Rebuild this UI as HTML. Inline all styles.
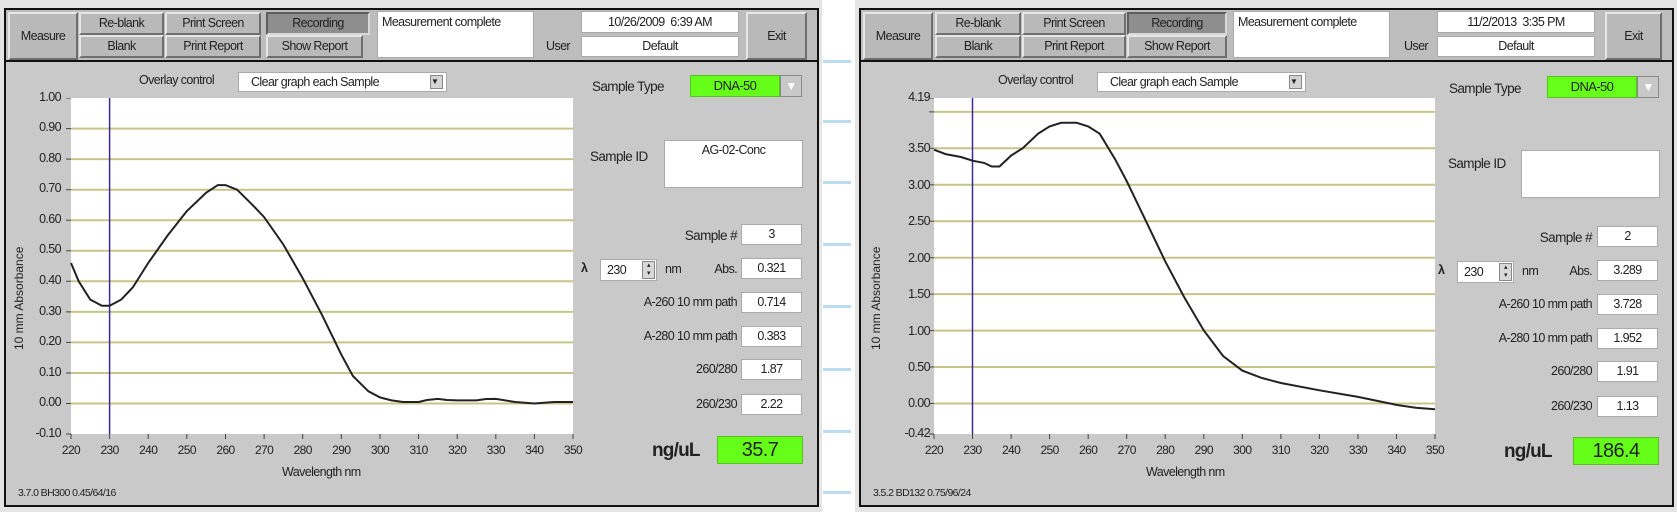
<!DOCTYPE html>
<html><head><meta charset="utf-8"><style>
*{margin:0;padding:0;box-sizing:border-box}
body{width:1677px;height:512px;background:#fff;position:relative;overflow:hidden;font-family:"Liberation Sans",sans-serif;font-size:12.5px;letter-spacing:-0.6px;color:#222}
.pan{position:absolute;top:0;width:822px;height:512px;background:#e4e4e4}
.frame{position:absolute;left:4px;top:8px;width:815px;height:499px;border:2px solid #111;background:#c9c9c9}
.tb{position:absolute;left:0;top:0;width:811px;height:52px;background:#bdbdbd;border-bottom:2px solid #111}
.a{position:absolute;white-space:nowrap}
.btn{position:absolute;background:#b9b9b9;border:2px solid;border-color:#e6e6e6 #6e6e6e #6e6e6e #e6e6e6;text-align:center;font-size:12.5px;color:#222;line-height:19px}
.dk{background:#8e8e8e;border-color:#5e5e5e #d8d8d8 #d8d8d8 #5e5e5e}
.wb{position:absolute;background:#fff;border:1px solid #aaa;text-align:center;font-size:12.5px}
.g{background:#66ff1a;border:1px solid #58c020;text-align:center;font-size:13px}
.lbl{position:absolute;text-align:right;white-space:nowrap;font-size:12.5px}
.dash{position:absolute;left:823px;width:28px;height:3px;background:#bcdcf4}
svg text{letter-spacing:-0.6px}
</style></head><body>

<div class="dash" style="top:60px"></div><div class="dash" style="top:120px"></div><div class="dash" style="top:181px"></div><div class="dash" style="top:243px"></div><div class="dash" style="top:305px"></div><div class="dash" style="top:368px"></div><div class="dash" style="top:430px"></div><div class="dash" style="top:491px"></div>

<!-- LEFT PANEL -->
<div class="pan" style="left:0">
<div class="frame">
 <div class="tb">
  <div class="btn" style="left:2px;top:2px;width:70px;height:48px;line-height:44px">Measure</div>
  <div class="btn" style="left:73px;top:2px;width:85px;height:23px">Re-blank</div>
  <div class="btn" style="left:73px;top:25px;width:85px;height:23px">Blank</div>
  <div class="btn" style="left:159px;top:2px;width:96px;height:23px">Print Screen</div>
  <div class="btn" style="left:159px;top:25px;width:96px;height:23px">Print Report</div>
  <div class="btn dk" style="left:260px;top:2px;width:104px;height:23px">Recording</div>
  <div class="btn" style="left:260px;top:25px;width:97px;height:23px">Show Report</div>
  <div class="wb" style="left:371px;top:1px;width:157px;height:47px;text-align:left;padding:2px 4px;line-height:16px">Measurement complete</div>
  <div class="a" style="left:540px;top:29px">User</div>
  <div class="wb" style="left:575px;top:1px;width:158px;height:22px;line-height:20px">10/26/2009&nbsp; 6:39 AM</div>
  <div class="wb" style="left:575px;top:26px;width:158px;height:21px;line-height:19px">Default</div>
  <div class="btn" style="left:740px;top:2px;width:61px;height:48px;line-height:44px">Exit</div>
 </div>
 <div class="a" style="left:133px;top:63px">Overlay control</div>
 <div class="wb" style="left:232px;top:62px;width:209px;height:20px;line-height:18px;text-align:left;padding-left:12px">Clear graph each Sample<span style="position:absolute;right:3px;top:2px;width:13px;height:14px;background:#d4d4d4;border:1px solid #888;font-size:8px;line-height:12px">▼</span></div>
 <div class="lbl" style="right:756px;top:80px">1.00</div>
 <div class="lbl" style="right:756px;top:110px">0.90</div>
 <div class="lbl" style="right:756px;top:141px">0.80</div>
 <div class="lbl" style="right:756px;top:171px">0.70</div>
 <div class="lbl" style="right:756px;top:202px">0.60</div>
 <div class="lbl" style="right:756px;top:232px">0.50</div>
 <div class="lbl" style="right:756px;top:263px">0.40</div>
 <div class="lbl" style="right:756px;top:294px">0.30</div>
 <div class="lbl" style="right:756px;top:324px">0.20</div>
 <div class="lbl" style="right:756px;top:355px">0.10</div>
 <div class="lbl" style="right:756px;top:385px">0.00</div>
 <div class="lbl" style="right:756px;top:416px">-0.10</div>
 <div class="a" style="left:6px;top:340px;transform:rotate(-90deg);transform-origin:0 0;font-size:12px;letter-spacing:0">10 mm Absorbance</div>
 <svg class="a" style="left:52px;top:88px" width="530" height="362" viewBox="-13 0 530 362">
  <rect x="0" y="0" width="502" height="336" fill="#fff"/>
  <g stroke="#c8c488" stroke-width="2">
   <line x1="0" x2="502" y1="30.6" y2="30.6"/><line x1="0" x2="502" y1="61.1" y2="61.1"/><line x1="0" x2="502" y1="91.7" y2="91.7"/><line x1="0" x2="502" y1="122.2" y2="122.2"/><line x1="0" x2="502" y1="152.8" y2="152.8"/><line x1="0" x2="502" y1="183.3" y2="183.3"/><line x1="0" x2="502" y1="213.9" y2="213.9"/><line x1="0" x2="502" y1="244.4" y2="244.4"/><line x1="0" x2="502" y1="275" y2="275"/><line x1="0" x2="502" y1="305.5" y2="305.5"/>
  </g>
  <g stroke="#444" stroke-width="1"><line x1="-5" x2="0" y1="0" y2="0"/><line x1="-5" x2="0" y1="30.6" y2="30.6"/><line x1="-5" x2="0" y1="61.1" y2="61.1"/><line x1="-5" x2="0" y1="91.7" y2="91.7"/><line x1="-5" x2="0" y1="122.2" y2="122.2"/><line x1="-5" x2="0" y1="152.8" y2="152.8"/><line x1="-5" x2="0" y1="183.3" y2="183.3"/><line x1="-5" x2="0" y1="213.9" y2="213.9"/><line x1="-5" x2="0" y1="244.4" y2="244.4"/><line x1="-5" x2="0" y1="275" y2="275"/><line x1="-5" x2="0" y1="305.5" y2="305.5"/><line x1="-5" x2="0" y1="336" y2="336"/></g>
  <line x1="38.6" x2="38.6" y1="0" y2="336" stroke="#3a2a9a" stroke-width="1.5"/>
  <polyline fill="none" stroke="#222" stroke-width="2" points="0,165 7.7,183.3 19.3,201.6 30.9,207.7 38.6,207.7 50.2,201.6 61.8,189.4 77.2,165 96.6,137.5 115.9,113 135.2,94.7 146.8,87.1 154.5,87.1 166.1,91.7 181.5,106.9 193.1,119.1 212.4,146.6 231.7,180.2 251,216.9 270.3,256.6 281.9,278 297.4,293.3 309,299.4 320.5,302.4 332.1,304 347.6,304 356,302 366.9,300.9 376,302 386.2,302.4 405.5,302.4 415,301 424.9,300.9 444.2,304 463.4,305.5 482.8,304 502,304"/>
  <g stroke="#444"><line x1="0" x2="0" y1="336" y2="341"/><line x1="38.6" x2="38.6" y1="336" y2="341"/><line x1="77.2" x2="77.2" y1="336" y2="341"/><line x1="115.8" x2="115.8" y1="336" y2="341"/><line x1="154.5" x2="154.5" y1="336" y2="341"/><line x1="193.1" x2="193.1" y1="336" y2="341"/><line x1="231.7" x2="231.7" y1="336" y2="341"/><line x1="270.3" x2="270.3" y1="336" y2="341"/><line x1="309" x2="309" y1="336" y2="341"/><line x1="347.6" x2="347.6" y1="336" y2="341"/><line x1="386.2" x2="386.2" y1="336" y2="341"/><line x1="424.8" x2="424.8" y1="336" y2="341"/><line x1="463.4" x2="463.4" y1="336" y2="341"/><line x1="502" x2="502" y1="336" y2="341"/></g>
  <g font-family="Liberation Sans, sans-serif" font-size="12" fill="#222" text-anchor="middle"><text x="0" y="356">220</text><text x="38.6" y="356">230</text><text x="77.2" y="356">240</text><text x="115.8" y="356">250</text><text x="154.5" y="356">260</text><text x="193.1" y="356">270</text><text x="231.7" y="356">280</text><text x="270.3" y="356">290</text><text x="309" y="356">300</text><text x="347.6" y="356">310</text><text x="386.2" y="356">320</text><text x="424.8" y="356">330</text><text x="463.4" y="356">340</text><text x="502" y="356">350</text></g>
 </svg>
 <div class="a" style="left:276px;top:455px">Wavelength nm</div>
 <div class="a" style="left:12px;top:477px;font-size:10.5px">3.7.0 BH300 0.45/64/16</div>
 <div class="a" style="left:586px;top:69px;font-size:13.5px">Sample Type</div>
 <div class="a g" style="left:684px;top:65px;width:90px;height:22px;line-height:20px">DNA-50</div>
 <div class="a" style="left:774px;top:65px;width:22px;height:22px;background:#c8c8c8;border:1px solid #888;color:#fff;font-size:12px;text-align:center;line-height:20px">▼</div>
 <div class="a" style="left:584px;top:139px;font-size:13.5px">Sample ID</div>
 <div class="wb" style="left:658px;top:130px;width:139px;height:48px;line-height:18px">AG-02-Conc</div>
 <div class="lbl" style="right:80px;top:218px;font-size:13.5px">Sample #</div>
 <div class="wb" style="left:735px;top:214px;width:61px;height:21px;line-height:19px">3</div>
 <div class="a" style="left:575px;top:251px;font-weight:bold">λ</div>
 <div class="wb" style="left:594px;top:249px;width:57px;height:22px;line-height:20px;text-align:left;padding-left:6px">230<span style="position:absolute;right:1px;top:1px;width:13px;height:18px;background:#d8d8d8;border:1px solid #888;font-size:7px;line-height:8px;text-align:center">▴<br>▾</span></div>
 <div class="a" style="left:659px;top:252px">nm</div>
 <div class="lbl" style="right:80px;top:252px">Abs.</div>
 <div class="wb" style="left:735px;top:248px;width:61px;height:21px;line-height:19px">0.321</div>
 <div class="lbl" style="right:80px;top:285px">A-260 10 mm path</div>
 <div class="wb" style="left:735px;top:282px;width:61px;height:21px;line-height:19px">0.714</div>
 <div class="lbl" style="right:80px;top:319px">A-280 10 mm path</div>
 <div class="wb" style="left:735px;top:316px;width:61px;height:21px;line-height:19px">0.383</div>
 <div class="lbl" style="right:80px;top:352px">260/280</div>
 <div class="wb" style="left:735px;top:349px;width:61px;height:21px;line-height:19px">1.87</div>
 <div class="lbl" style="right:80px;top:387px">260/230</div>
 <div class="wb" style="left:735px;top:384px;width:61px;height:21px;line-height:19px">2.22</div>
 <div class="a" style="left:646px;top:430px;font-size:19px;font-weight:bold;letter-spacing:-0.8px">ng/uL</div>
 <div class="a g" style="left:711px;top:426px;width:86px;height:28px;line-height:26px;font-size:20px">35.7</div>
</div>
</div>

<!-- RIGHT PANEL -->
<div class="pan" style="left:855px">
<div class="frame">
 <div class="tb">
  <div class="btn" style="left:2px;top:2px;width:70px;height:48px;line-height:44px">Measure</div>
  <div class="btn" style="left:74px;top:2px;width:86px;height:23px">Re-blank</div>
  <div class="btn" style="left:74px;top:25px;width:86px;height:23px">Blank</div>
  <div class="btn" style="left:161px;top:2px;width:104px;height:23px">Print Screen</div>
  <div class="btn" style="left:161px;top:25px;width:104px;height:23px">Print Report</div>
  <div class="btn dk" style="left:266px;top:2px;width:100px;height:23px">Recording</div>
  <div class="btn" style="left:266px;top:25px;width:100px;height:23px">Show Report</div>
  <div class="wb" style="left:372px;top:1px;width:157px;height:47px;text-align:left;padding:2px 4px;line-height:16px">Measurement complete</div>
  <div class="a" style="left:543px;top:29px">User</div>
  <div class="wb" style="left:576px;top:1px;width:158px;height:22px;line-height:20px">11/2/2013&nbsp; 3:35 PM</div>
  <div class="wb" style="left:576px;top:26px;width:158px;height:21px;line-height:19px">Default</div>
  <div class="btn" style="left:744px;top:2px;width:57px;height:48px;line-height:44px">Exit</div>
 </div>
 <div class="a" style="left:137px;top:63px">Overlay control</div>
 <div class="wb" style="left:236px;top:62px;width:209px;height:20px;line-height:18px;text-align:left;padding-left:12px">Clear graph each Sample<span style="position:absolute;right:3px;top:2px;width:13px;height:14px;background:#d4d4d4;border:1px solid #888;font-size:8px;line-height:12px">▼</span></div>
 <div class="lbl" style="right:742px;top:80px">4.19</div>
 <div class="lbl" style="right:742px;top:131px">3.50</div>
 <div class="lbl" style="right:742px;top:168px">3.00</div>
 <div class="lbl" style="right:742px;top:204px">2.50</div>
 <div class="lbl" style="right:742px;top:241px">2.00</div>
 <div class="lbl" style="right:742px;top:277px">1.50</div>
 <div class="lbl" style="right:742px;top:314px">1.00</div>
 <div class="lbl" style="right:742px;top:350px">0.50</div>
 <div class="lbl" style="right:742px;top:386px">0.00</div>
 <div class="lbl" style="right:742px;top:416px">-0.42</div>
 <div class="a" style="left:8px;top:340px;transform:rotate(-90deg);transform-origin:0 0;font-size:12px;letter-spacing:0">10 mm Absorbance</div>
 <svg class="a" style="left:60px;top:88px" width="530" height="362" viewBox="-13 0 530 362">
  <rect x="0" y="0" width="501" height="336" fill="#fff"/>
  <g stroke="#c8c488" stroke-width="2">
   <line x1="0" x2="501" y1="13.9" y2="13.9"/><line x1="0" x2="501" y1="50.3" y2="50.3"/><line x1="0" x2="501" y1="86.8" y2="86.8"/><line x1="0" x2="501" y1="123.2" y2="123.2"/><line x1="0" x2="501" y1="159.7" y2="159.7"/><line x1="0" x2="501" y1="196.1" y2="196.1"/><line x1="0" x2="501" y1="232.6" y2="232.6"/><line x1="0" x2="501" y1="269" y2="269"/><line x1="0" x2="501" y1="305.5" y2="305.5"/>
  </g>
  <g stroke="#444"><line x1="-5" x2="0" y1="0" y2="0"/><line x1="-5" x2="0" y1="13.9" y2="13.9"/><line x1="-5" x2="0" y1="50.3" y2="50.3"/><line x1="-5" x2="0" y1="86.8" y2="86.8"/><line x1="-5" x2="0" y1="123.2" y2="123.2"/><line x1="-5" x2="0" y1="159.7" y2="159.7"/><line x1="-5" x2="0" y1="196.1" y2="196.1"/><line x1="-5" x2="0" y1="232.6" y2="232.6"/><line x1="-5" x2="0" y1="269" y2="269"/><line x1="-5" x2="0" y1="305.5" y2="305.5"/><line x1="-5" x2="0" y1="336" y2="336"/></g>
  <line x1="38.5" x2="38.5" y1="0" y2="336" stroke="#3a2a9a" stroke-width="1.5"/>
  <polyline fill="none" stroke="#222" stroke-width="2" points="0,51.7 11.6,56.1 27,59 38.5,62.7 50.1,64.9 57.8,68.5 65.5,68.5 77.1,57.6 88.6,50.3 104.1,35.7 115.6,28.4 127.2,24.8 142.6,24.8 154.2,28.4 165.7,35.7 181.1,61.2 192.7,83.1 212,123.2 231.2,163.3 250.5,199.7 269.8,232.5 289.1,258 308.3,272.6 327.6,279.9 346.9,285 385.4,292.3 424,298.9 462.5,306.9 481.8,309.8 501,311.3"/>
  <g stroke="#444"><line x1="0" x2="0" y1="336" y2="341"/><line x1="38.5" x2="38.5" y1="336" y2="341"/><line x1="77.1" x2="77.1" y1="336" y2="341"/><line x1="115.6" x2="115.6" y1="336" y2="341"/><line x1="154.2" x2="154.2" y1="336" y2="341"/><line x1="192.7" x2="192.7" y1="336" y2="341"/><line x1="231.2" x2="231.2" y1="336" y2="341"/><line x1="269.8" x2="269.8" y1="336" y2="341"/><line x1="308.3" x2="308.3" y1="336" y2="341"/><line x1="346.9" x2="346.9" y1="336" y2="341"/><line x1="385.4" x2="385.4" y1="336" y2="341"/><line x1="424" x2="424" y1="336" y2="341"/><line x1="462.5" x2="462.5" y1="336" y2="341"/><line x1="501" x2="501" y1="336" y2="341"/></g>
  <g font-family="Liberation Sans, sans-serif" font-size="12" fill="#222" text-anchor="middle"><text x="0" y="356">220</text><text x="38.5" y="356">230</text><text x="77.1" y="356">240</text><text x="115.6" y="356">250</text><text x="154.2" y="356">260</text><text x="192.7" y="356">270</text><text x="231.2" y="356">280</text><text x="269.8" y="356">290</text><text x="308.3" y="356">300</text><text x="346.9" y="356">310</text><text x="385.4" y="356">320</text><text x="424" y="356">330</text><text x="462.5" y="356">340</text><text x="501" y="356">350</text></g>
 </svg>
 <div class="a" style="left:285px;top:455px">Wavelength nm</div>
 <div class="a" style="left:12px;top:477px;font-size:10.5px">3.5.2 BD132 0.75/96/24</div>
 <div class="a" style="left:588px;top:71px;font-size:13.5px">Sample Type</div>
 <div class="a g" style="left:686px;top:66px;width:90px;height:22px;line-height:20px">DNA-50</div>
 <div class="a" style="left:776px;top:66px;width:22px;height:22px;background:#c8c8c8;border:1px solid #888;color:#fff;font-size:12px;text-align:center;line-height:20px">▼</div>
 <div class="a" style="left:587px;top:146px;font-size:13.5px">Sample ID</div>
 <div class="wb" style="left:660px;top:140px;width:139px;height:48px"></div>
 <div class="lbl" style="right:80px;top:220px;font-size:13.5px">Sample #</div>
 <div class="wb" style="left:736px;top:216px;width:61px;height:21px;line-height:19px">2</div>
 <div class="a" style="left:577px;top:253px;font-weight:bold">λ</div>
 <div class="wb" style="left:596px;top:251px;width:57px;height:22px;line-height:20px;text-align:left;padding-left:6px">230<span style="position:absolute;right:1px;top:1px;width:13px;height:18px;background:#d8d8d8;border:1px solid #888;font-size:7px;line-height:8px;text-align:center">▴<br>▾</span></div>
 <div class="a" style="left:661px;top:254px">nm</div>
 <div class="lbl" style="right:80px;top:254px">Abs.</div>
 <div class="wb" style="left:736px;top:250px;width:61px;height:21px;line-height:19px">3.289</div>
 <div class="lbl" style="right:80px;top:287px">A-260 10 mm path</div>
 <div class="wb" style="left:736px;top:284px;width:61px;height:21px;line-height:19px">3.728</div>
 <div class="lbl" style="right:80px;top:321px">A-280 10 mm path</div>
 <div class="wb" style="left:736px;top:318px;width:61px;height:21px;line-height:19px">1.952</div>
 <div class="lbl" style="right:80px;top:354px">260/280</div>
 <div class="wb" style="left:736px;top:351px;width:61px;height:21px;line-height:19px">1.91</div>
 <div class="lbl" style="right:80px;top:389px">260/230</div>
 <div class="wb" style="left:736px;top:386px;width:61px;height:21px;line-height:19px">1.13</div>
 <div class="a" style="left:643px;top:431px;font-size:19px;font-weight:bold;letter-spacing:-0.8px">ng/uL</div>
 <div class="a g" style="left:712px;top:427px;width:86px;height:28px;line-height:26px;font-size:20px">186.4</div>
</div>
</div>
</body></html>
